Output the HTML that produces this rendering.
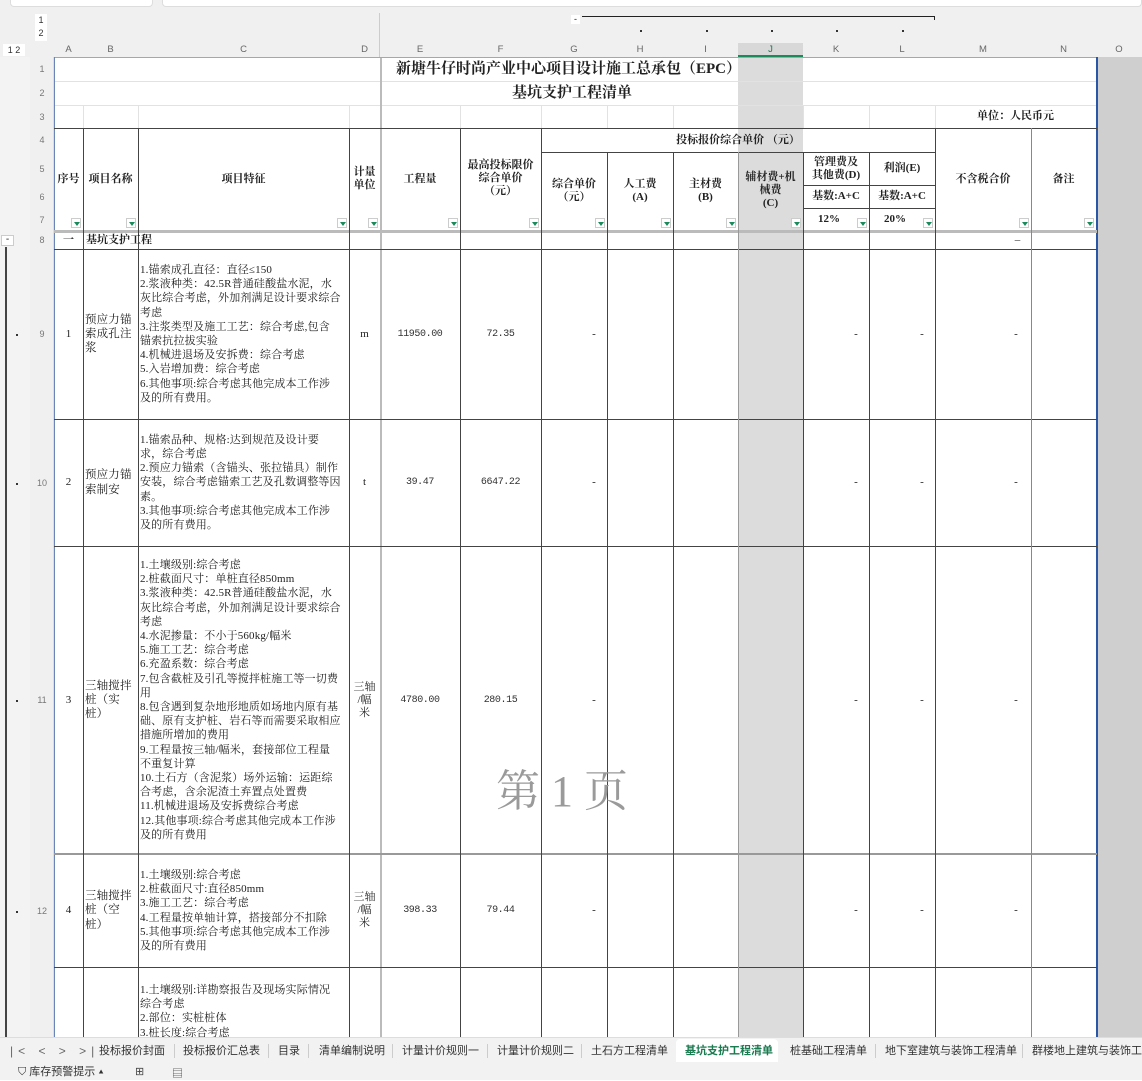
<!DOCTYPE html>
<html><head><meta charset="utf-8"><style>
*{margin:0;padding:0;box-sizing:border-box}
body{width:1142px;height:1080px;overflow:hidden;background:#fff;position:relative;font-family:"Liberation Serif","Noto Serif CJK SC",serif;color:#222}
div{position:absolute}
.v{width:1px;background:#444}
.h{height:1px;background:#444}
.lv{width:1px;background:#e2e2e2}
.lh{height:1px;background:#e2e2e2}
.c{display:flex;align-items:center;justify-content:center;text-align:center;font-size:11px;line-height:13px}
.b{font-weight:bold}
.t{display:flex;align-items:center;font-size:11px;line-height:14.2px;text-align:left;white-space:nowrap;letter-spacing:0.15px}
.n{font-family:"Liberation Mono",monospace;font-size:10px;letter-spacing:-0.4px;color:#333}
.sans{font-family:"Liberation Sans","Noto Sans CJK SC",sans-serif}
.hd{top:43px;height:14px;font-size:9.5px;color:#666;text-align:center;line-height:14px}
.rn{left:30px;width:24px;font-size:9px;color:#777;text-align:center;display:flex;align-items:center;justify-content:center}
.dd{width:10px;height:10px;border:1px solid #ccc;background:#fff}
.dd:after{content:"";position:absolute;left:2px;top:3px;border-left:3px solid transparent;border-right:3px solid transparent;border-top:4px solid #1a8a5a}
.dot{width:2px;height:2px;background:#333;left:16px}
.tab{top:1040px;height:22px;font-size:11px;line-height:22px;color:#333}
</style></head><body>
<div style="left:0;top:0;width:1142px;height:57px;background:#f0f0f0"></div>
<div style="left:10px;top:0;width:143px;height:7px;background:#fff;border:1px solid #ddd;border-top:none;border-radius:0 0 4px 4px"></div>
<div style="left:162px;top:0;width:980px;height:7px;background:#fff;border:1px solid #ddd;border-top:none;border-radius:0 0 4px 4px"></div>
<div class="sans" style="left:35px;top:14px;width:12px;height:27px;background:#fff;font-size:9px;line-height:13px;text-align:center;color:#333">1<br>2</div>
<div class="sans" style="left:3px;top:44px;width:22px;height:12px;background:#fff;font-size:9px;line-height:12px;text-align:center;color:#333">1 2</div>
<div style="left:379px;top:13px;width:1px;height:44px;background:#ccc"></div>
<div class="sans" style="left:571px;top:15px;width:9px;height:9px;background:#fff;font-size:9px;line-height:8px;text-align:center">-</div>
<div style="left:582px;top:16px;width:353px;height:1px;background:#222"></div>
<div style="left:934px;top:16px;width:1px;height:4px;background:#222"></div>
<div style="left:640px;top:30px;width:2px;height:2px;background:#333"></div>
<div style="left:706px;top:30px;width:2px;height:2px;background:#333"></div>
<div style="left:771px;top:30px;width:2px;height:2px;background:#333"></div>
<div style="left:836px;top:30px;width:2px;height:2px;background:#333"></div>
<div style="left:902px;top:30px;width:2px;height:2px;background:#333"></div>
<div style="left:738px;top:43px;width:65px;height:14px;background:#d8d8d8;border-bottom:2px solid #1a8a5a"></div>
<div class="hd sans" style="left:54px;width:29px">A</div>
<div class="hd sans" style="left:83px;width:55px">B</div>
<div class="hd sans" style="left:138px;width:211px">C</div>
<div class="hd sans" style="left:349px;width:31px">D</div>
<div class="hd sans" style="left:380px;width:80px">E</div>
<div class="hd sans" style="left:460px;width:81px">F</div>
<div class="hd sans" style="left:541px;width:66px">G</div>
<div class="hd sans" style="left:607px;width:66px">H</div>
<div class="hd sans" style="left:673px;width:65px">I</div>
<div class="hd sans" style="left:738px;width:65px;color:#1a7a50">J</div>
<div class="hd sans" style="left:803px;width:66px">K</div>
<div class="hd sans" style="left:869px;width:66px">L</div>
<div class="hd sans" style="left:935px;width:96px">M</div>
<div class="hd sans" style="left:1031px;width:65px">N</div>
<div class="hd sans" style="left:1096px;width:46px">O</div>
<div style="left:0;top:57px;width:30px;height:980px;background:#f3f3f3"></div>
<div style="left:30px;top:57px;width:24px;height:980px;background:#f0f0f0;border-right:1px solid #ddd"></div>
<div style="left:1097px;top:57px;width:45px;height:980px;background:#cfcfcf"></div>
<div style="left:738px;top:57px;width:65px;height:980px;background:#dcdcdc"></div>
<div class="rn sans" style="top:57px;height:24px">1</div>
<div class="rn sans" style="top:81px;height:24px">2</div>
<div class="rn sans" style="top:105px;height:23px">3</div>
<div class="rn sans" style="top:128px;height:24px">4</div>
<div class="rn sans" style="top:152px;height:33px">5</div>
<div class="rn sans" style="top:185px;height:23px">6</div>
<div class="rn sans" style="top:208px;height:23px">7</div>
<div class="rn sans" style="top:231px;height:18px">8</div>
<div class="rn sans" style="top:249px;height:170px">9</div>
<div class="rn sans" style="top:419px;height:127px">10</div>
<div class="rn sans" style="top:546px;height:308px">11</div>
<div class="rn sans" style="top:854px;height:113px">12</div>
<div class="sans" style="left:1px;top:235px;width:13px;height:11px;background:#fff;border:1px solid #ccc;font-size:10px;line-height:8px;text-align:center">-</div>
<div style="left:5px;top:247px;width:2px;height:790px;background:#444"></div>
<div class="dot" style="top:334px"></div>
<div class="dot" style="top:483px"></div>
<div class="dot" style="top:700px"></div>
<div class="dot" style="top:911px"></div>
<div class="lh" style="left:54px;top:81px;width:1043px"></div>
<div class="lh" style="left:54px;top:105px;width:1043px"></div>
<div class="lv" style="left:83px;top:105px;height:23px"></div>
<div class="lv" style="left:138px;top:105px;height:23px"></div>
<div class="lv" style="left:349px;top:105px;height:23px"></div>
<div class="lv" style="left:460px;top:105px;height:23px"></div>
<div class="lv" style="left:541px;top:105px;height:23px"></div>
<div class="lv" style="left:607px;top:105px;height:23px"></div>
<div class="lv" style="left:673px;top:105px;height:23px"></div>
<div class="lv" style="left:803px;top:105px;height:23px"></div>
<div class="lv" style="left:869px;top:105px;height:23px"></div>
<div class="lv" style="left:935px;top:105px;height:23px"></div>
<div style="left:380px;top:57px;width:2px;height:980px;background:#bbb"></div>
<div style="left:54px;top:57px;width:1043px;height:1px;background:#9ab"></div>
<div style="left:54px;top:57px;width:1px;height:980px;background:#6a86b8"></div>
<div style="left:1096px;top:57px;width:2px;height:980px;background:#2a56a8"></div>
<div class="c b" style="left:380px;top:57px;width:390px;height:24px;font-size:15px;justify-content:flex-start;padding-left:16px">新塘牛仔时尚产业中心项目设计施工总承包（EPC）</div>
<div class="c b" style="left:380px;top:81px;width:390px;height:24px;font-size:15px;justify-content:flex-start;padding-left:132px">基坑支护工程清单</div>
<div class="c b" style="left:935px;top:105px;width:161px;height:23px">单位：人民币元</div>
<div class="h" style="left:54px;top:128px;width:1043px"></div>
<div class="h" style="left:541px;top:152px;width:394px"></div>
<div class="h" style="left:803px;top:185px;width:132px"></div>
<div class="h" style="left:803px;top:208px;width:132px"></div>
<div style="left:54px;top:230px;width:1043px;height:3px;background:#bbb"></div>
<div class="h" style="left:54px;top:249px;width:1043px"></div>
<div class="h" style="left:54px;top:419px;width:1043px"></div>
<div class="h" style="left:54px;top:546px;width:1043px"></div>
<div style="left:54px;top:853px;width:1043px;height:2px;background:#999"></div>
<div class="h" style="left:54px;top:967px;width:1043px"></div>
<div class="v" style="left:83px;top:128px;height:909px"></div>
<div class="v" style="left:138px;top:128px;height:909px"></div>
<div class="v" style="left:349px;top:128px;height:909px"></div>
<div class="v" style="left:460px;top:128px;height:909px"></div>
<div class="v" style="left:541px;top:128px;height:909px"></div>
<div class="v" style="left:607px;top:152px;height:885px"></div>
<div class="v" style="left:673px;top:152px;height:885px"></div>
<div class="v" style="left:738px;top:152px;height:885px;background:#999"></div>
<div class="v" style="left:803px;top:152px;height:885px"></div>
<div class="v" style="left:869px;top:152px;height:885px"></div>
<div class="v" style="left:935px;top:128px;height:909px"></div>
<div class="v" style="left:1031px;top:128px;height:909px;background:#888"></div>
<div class="c b" style="left:54px;top:128px;width:29px;height:103px">序号</div>
<div class="c b" style="left:83px;top:128px;width:55px;height:103px">项目名称</div>
<div class="c b" style="left:138px;top:128px;width:211px;height:103px">项目特征</div>
<div class="c b" style="left:349px;top:128px;width:31px;height:103px;padding-bottom:2px">计量<br>单位</div>
<div class="c b" style="left:380px;top:128px;width:80px;height:103px">工程量</div>
<div class="c b" style="left:460px;top:128px;width:81px;height:103px;padding-bottom:2px">最高投标限价<br>综合单价<br>（元）</div>
<div class="c b" style="left:541px;top:128px;width:394px;height:24px">投标报价综合单价 （元）</div>
<div class="c b" style="left:541px;top:152px;width:66px;height:79px;padding-bottom:2px">综合单价<br>（元）</div>
<div class="c b" style="left:607px;top:152px;width:66px;height:79px;padding-bottom:2px">人工费<br>(A)</div>
<div class="c b" style="left:673px;top:152px;width:65px;height:79px;padding-bottom:2px">主材费<br>(B)</div>
<div class="c b" style="left:738px;top:152px;width:65px;height:79px;padding-bottom:2px">辅材费+机<br>械费<br>(C)</div>
<div class="c b" style="left:803px;top:152px;width:66px;height:33px">管理费及<br>其他费(D)</div>
<div class="c b" style="left:869px;top:152px;width:66px;height:33px">利润(E)</div>
<div class="c b" style="left:803px;top:185px;width:66px;height:23px">基数:A+C</div>
<div class="c b" style="left:869px;top:185px;width:66px;height:23px">基数:A+C</div>
<div class="c b" style="left:803px;top:208px;width:52px;height:23px">12%</div>
<div class="c b" style="left:869px;top:208px;width:52px;height:23px">20%</div>
<div class="c b" style="left:935px;top:128px;width:96px;height:103px">不含税合价</div>
<div class="c b" style="left:1031px;top:128px;width:65px;height:103px">备注</div>
<div class="dd" style="left:71px;top:218px"></div>
<div class="dd" style="left:126px;top:218px"></div>
<div class="dd" style="left:337px;top:218px"></div>
<div class="dd" style="left:368px;top:218px"></div>
<div class="dd" style="left:448px;top:218px"></div>
<div class="dd" style="left:529px;top:218px"></div>
<div class="dd" style="left:595px;top:218px"></div>
<div class="dd" style="left:661px;top:218px"></div>
<div class="dd" style="left:726px;top:218px"></div>
<div class="dd" style="left:791px;top:218px"></div>
<div class="dd" style="left:857px;top:218px"></div>
<div class="dd" style="left:923px;top:218px"></div>
<div class="dd" style="left:1019px;top:218px"></div>
<div class="dd" style="left:1084px;top:218px"></div>
<div class="c b" style="left:54px;top:232px;width:29px;height:17px">一</div>
<div class="c b" style="left:86px;top:232px;width:200px;height:17px;justify-content:flex-start">基坑支护工程</div>
<div class="c" style="left:1010px;top:232px;width:15px;height:17px">–</div>
<div class="c" style="left:54px;top:249px;width:29px;height:170px">1</div>
<div class="t" style="left:85px;top:249px;width:53px;height:170px;font-size:11.5px">预应力锚<br>索成孔注<br>浆</div>
<div class="t" style="left:140px;top:249px;width:209px;height:170px">1.锚索成孔直径：直径≤150<br>2.浆液种类：42.5R普通硅酸盐水泥，水<br>灰比综合考虑，外加剂满足设计要求综合<br>考虑<br>3.注浆类型及施工工艺：综合考虑,包含<br>锚索抗拉拔实验<br>4.机械进退场及安拆费：综合考虑<br>5.入岩增加费：综合考虑<br>6.其他事项:综合考虑其他完成本工作涉<br>及的所有费用。</div>
<div class="c" style="left:349px;top:249px;width:31px;height:170px">m</div>
<div class="c n" style="left:380px;top:249px;width:80px;height:170px">11950.00</div>
<div class="c n" style="left:460px;top:249px;width:81px;height:170px">72.35</div>
<div class="c" style="left:54px;top:419px;width:29px;height:127px">2</div>
<div class="t" style="left:85px;top:419px;width:53px;height:127px;font-size:11.5px">预应力锚<br>索制安</div>
<div class="t" style="left:140px;top:419px;width:209px;height:127px">1.锚索品种、规格:达到规范及设计要<br>求，综合考虑<br>2.预应力锚索（含锚头、张拉锚具）制作<br>安装，综合考虑锚索工艺及孔数调整等因<br>素。<br>3.其他事项:综合考虑其他完成本工作涉<br>及的所有费用。</div>
<div class="c" style="left:349px;top:419px;width:31px;height:127px">t</div>
<div class="c n" style="left:380px;top:419px;width:80px;height:127px">39.47</div>
<div class="c n" style="left:460px;top:419px;width:81px;height:127px">6647.22</div>
<div class="c" style="left:54px;top:546px;width:29px;height:308px">3</div>
<div class="t" style="left:85px;top:546px;width:53px;height:308px;font-size:11.5px">三轴搅拌<br>桩（实<br>桩）</div>
<div class="t" style="left:140px;top:546px;width:209px;height:308px">1.土壤级别:综合考虑<br>2.桩截面尺寸：单桩直径850mm<br>3.浆液种类：42.5R普通硅酸盐水泥，水<br>灰比综合考虑，外加剂满足设计要求综合<br>考虑<br>4.水泥掺量：不小于560kg/幅米<br>5.施工工艺：综合考虑<br>6.充盈系数：综合考虑<br>7.包含截桩及引孔等搅拌桩施工等一切费<br>用<br>8.包含遇到复杂地形地质如场地内原有基<br>础、原有支护桩、岩石等而需要采取相应<br>措施所增加的费用<br>9.工程量按三轴/幅米，套接部位工程量<br>不重复计算<br>10.土石方（含泥浆）场外运输：运距综<br>合考虑，含余泥渣土弃置点处置费<br>11.机械进退场及安拆费综合考虑<br>12.其他事项:综合考虑其他完成本工作涉<br>及的所有费用</div>
<div class="c" style="left:349px;top:546px;width:31px;height:308px">三轴<br>/幅<br>米</div>
<div class="c n" style="left:380px;top:546px;width:80px;height:308px">4780.00</div>
<div class="c n" style="left:460px;top:546px;width:81px;height:308px">280.15</div>
<div class="c" style="left:54px;top:854px;width:29px;height:113px">4</div>
<div class="t" style="left:85px;top:854px;width:53px;height:113px;font-size:11.5px">三轴搅拌<br>桩（空<br>桩）</div>
<div class="t" style="left:140px;top:854px;width:209px;height:113px">1.土壤级别:综合考虑<br>2.桩截面尺寸:直径850mm<br>3.施工工艺：综合考虑<br>4.工程量按单轴计算，搭接部分不扣除<br>5.其他事项:综合考虑其他完成本工作涉<br>及的所有费用</div>
<div class="c" style="left:349px;top:854px;width:31px;height:113px">三轴<br>/幅<br>米</div>
<div class="c n" style="left:380px;top:854px;width:80px;height:113px">398.33</div>
<div class="c n" style="left:460px;top:854px;width:81px;height:113px">79.44</div>
<div class="t" style="left:140px;top:983px;width:209px;height:56px;align-items:flex-start">1.土壤级别:详勘察报告及现场实际情况<br>综合考虑<br>2.部位：实桩桩体<br>3.桩长度:综合考虑</div>
<div class="c" style="left:588px;top:249px;width:12px;height:170px">-</div>
<div class="c" style="left:850px;top:249px;width:12px;height:170px">-</div>
<div class="c" style="left:916px;top:249px;width:12px;height:170px">-</div>
<div class="c" style="left:1010px;top:249px;width:12px;height:170px">-</div>
<div class="c" style="left:588px;top:419px;width:12px;height:127px">-</div>
<div class="c" style="left:850px;top:419px;width:12px;height:127px">-</div>
<div class="c" style="left:916px;top:419px;width:12px;height:127px">-</div>
<div class="c" style="left:1010px;top:419px;width:12px;height:127px">-</div>
<div class="c" style="left:588px;top:546px;width:12px;height:308px">-</div>
<div class="c" style="left:850px;top:546px;width:12px;height:308px">-</div>
<div class="c" style="left:916px;top:546px;width:12px;height:308px">-</div>
<div class="c" style="left:1010px;top:546px;width:12px;height:308px">-</div>
<div class="c" style="left:588px;top:854px;width:12px;height:113px">-</div>
<div class="c" style="left:850px;top:854px;width:12px;height:113px">-</div>
<div class="c" style="left:916px;top:854px;width:12px;height:113px">-</div>
<div class="c" style="left:1010px;top:854px;width:12px;height:113px">-</div>
<div style="left:496px;top:765px;font-size:44px;line-height:54px;color:#9a9a9a;white-space:pre">第 1 页</div>
<div style="left:0;top:1037px;width:1142px;height:43px;background:#f2f2f2;border-top:1px solid #ddd"></div>
<div class="tab sans" style="left:10px;color:#666;font-size:12px;letter-spacing:5px">|&lt; &lt; &gt; &gt;|</div>
<div style="left:676px;top:1039px;width:102px;height:23px;background:#fff;border-radius:4px 4px 0 0"></div>
<div class="tab sans" style="left:99px">投标报价封面</div>
<div class="tab sans" style="left:183px">投标报价汇总表</div>
<div class="tab sans" style="left:278px">目录</div>
<div class="tab sans" style="left:319px">清单编制说明</div>
<div class="tab sans" style="left:402px">计量计价规则一</div>
<div class="tab sans" style="left:497px">计量计价规则二</div>
<div class="tab sans" style="left:591px">土石方工程清单</div>
<div class="tab sans b" style="left:685px;color:#1a7a50">基坑支护工程清单</div>
<div class="tab sans" style="left:790px">桩基础工程清单</div>
<div class="tab sans" style="left:885px">地下室建筑与装饰工程清单</div>
<div class="tab sans" style="left:1032px;white-space:nowrap">群楼地上建筑与装饰工程</div>
<div style="left:174px;top:1044px;width:1px;height:14px;background:#ccc"></div>
<div style="left:268px;top:1044px;width:1px;height:14px;background:#ccc"></div>
<div style="left:308px;top:1044px;width:1px;height:14px;background:#ccc"></div>
<div style="left:392px;top:1044px;width:1px;height:14px;background:#ccc"></div>
<div style="left:487px;top:1044px;width:1px;height:14px;background:#ccc"></div>
<div style="left:581px;top:1044px;width:1px;height:14px;background:#ccc"></div>
<div style="left:875px;top:1044px;width:1px;height:14px;background:#ccc"></div>
<div style="left:1022px;top:1044px;width:1px;height:14px;background:#ccc"></div>
<div class="sans" style="left:18px;top:1065px;font-size:11px;color:#333;line-height:14px">⛉ 库存预警提示 ▴</div>
<div class="sans" style="left:135px;top:1065px;font-size:11px;color:#444">⊞</div>
<div class="sans" style="left:172px;top:1065px;font-size:11px;color:#444">▤</div>
</body></html>
